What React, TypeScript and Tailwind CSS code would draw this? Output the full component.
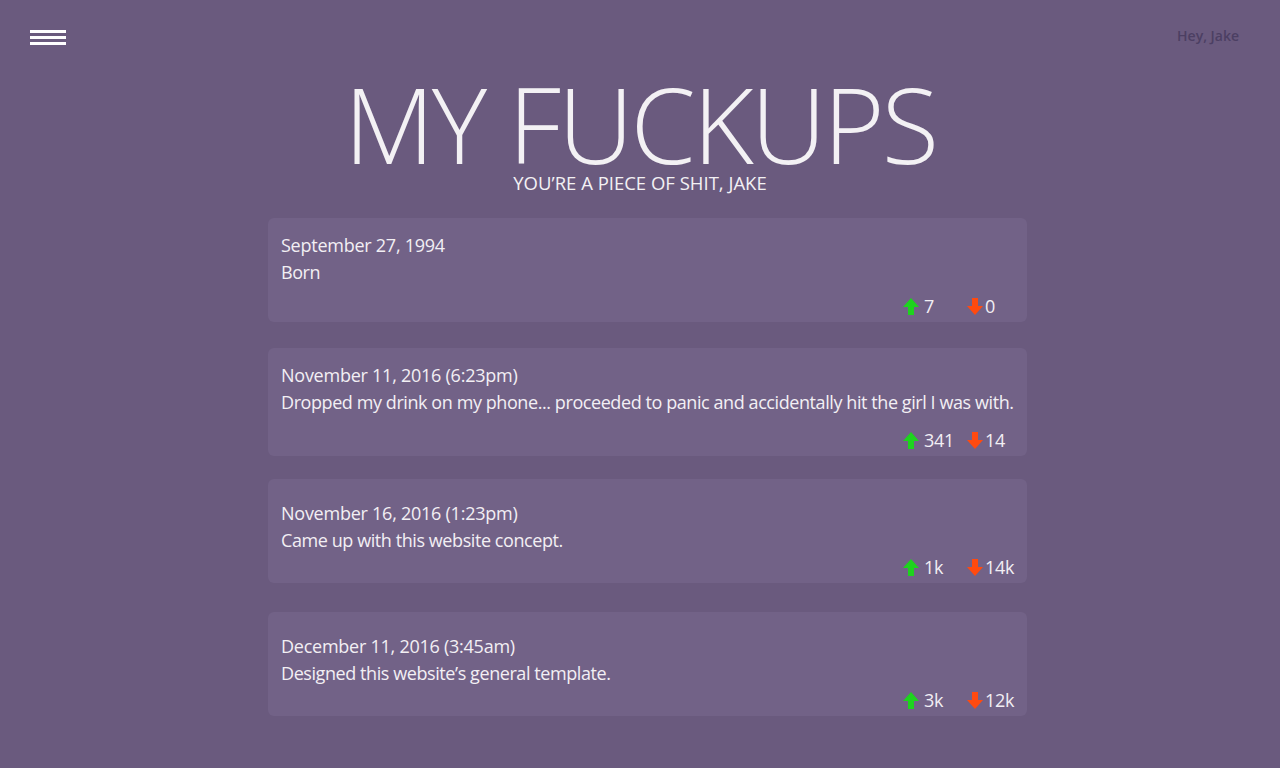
import React from 'react';

type Entry = {
  date: string;
  text: string;
  up: string;
  down: string;
  top: string;
  pad: string;
  gap: string;
};

const entries: Entry[] = [
  { date: 'September 27, 1994', text: 'Born', up: '7', down: '0', top: 'mt-[26px]', pad: 'pt-[14px]', gap: 'mt-[8px]' },
  {
    date: 'November 11, 2016 (6:23pm)',
    text: 'Dropped my drink on my phone... proceeded to panic and accidentally hit the girl I was with.',
    up: '341',
    down: '14',
    top: 'mt-[26px]',
    pad: 'pt-[14px]',
    gap: 'mt-[12px]',
  },
  { date: 'November 16, 2016 (1:23pm)', text: 'Came up with this website concept.', up: '1k', down: '14k', top: 'mt-[23px]', pad: 'pt-[21px]', gap: 'mt-[1px]' },
  { date: 'December 11, 2016 (3:45am)', text: 'Designed this website’s general template.', up: '3k', down: '12k', top: 'mt-[29px]', pad: 'pt-[21px]', gap: 'mt-[1px]' },
];

const UpArrow = () => (
  <svg width="16" height="17" viewBox="0 0 16 17" className="shrink-0">
    <path d="M8 0 L16 9 L11 9 L11 17 L5 17 L5 9 L0 9 Z" fill="#1ed31e" />
  </svg>
);

const DownArrow = () => (
  <svg width="16" height="17" viewBox="0 0 16 17" className="shrink-0">
    <path d="M8 17 L16 8 L11 8 L11 0 L5 0 L5 8 L0 8 Z" fill="#ff4a0f" />
  </svg>
);

const Card = ({ e }: { e: Entry }) => (
  <div className={`${e.top} ${e.pad} pb-[4px] px-[13px] rounded-[6px] bg-[#726287] text-[#f2eff4] text-[18px] tracking-[-0.25px]`}>
    <div className="leading-[27px]">{e.date}</div>
    <div className="leading-[27px] whitespace-nowrap tracking-[-0.42px]">{e.text}</div>
    <div className={`${e.gap} flex justify-end h-[24px] items-center`}>
      <div className="w-[64px] flex items-center gap-[5px]">
        <UpArrow />
        <span>{e.up}</span>
      </div>
      <div className="w-[47px] flex items-center gap-[2px]">
        <DownArrow />
        <span>{e.down}</span>
      </div>
    </div>
  </div>
);

export default function App() {
  return (
    <div
      className="min-h-[768px] bg-[#6a5a7e] pb-10"
      style={{ fontFamily: '"Open Sans", "Noto Sans", sans-serif' }}
    >
      <div className="flex justify-between items-start px-[30px] pt-[30px]">
        <button className="flex flex-col gap-[3px] w-[36px]">
          <span className="block h-[3px] bg-white" />
          <span className="block h-[3px] bg-white" />
          <span className="block h-[3px] bg-white" />
        </button>
        <span className="mr-[11px] -mt-[5px] text-[14px] font-semibold text-[#4c3f63]">Hey, Jake</span>
      </div>

      <h1 className="mt-[33px] text-center text-[105px] leading-[90px] font-light text-[#f3f1f4] tracking-[-3px]">
        MY FUCKUPS
      </h1>
      <p className="mt-[5px] text-center text-[18.5px] leading-[18px] text-[#f3f1f4]">YOU’RE A PIECE OF SHIT, JAKE</p>

      <div className="ml-[268px] w-[759px]">
        {entries.map((e) => (
          <Card key={e.date} e={e} />
        ))}
      </div>
    </div>
  );
}
